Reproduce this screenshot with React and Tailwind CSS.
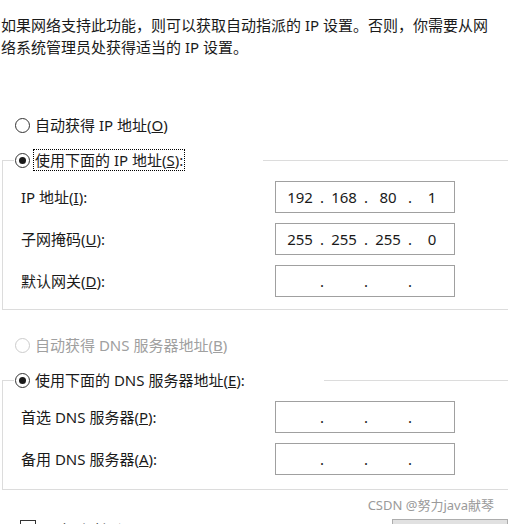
import React from "react";

function Radio({ checked, disabled }) {
    return (
        <span
            className={
                "flex h-[15px] w-[15px] shrink-0 items-center justify-center rounded-full border bg-white " +
                (disabled ? "border-[#cccccc]" : "border-[#333333]")
            }
        >
            {checked && <span className="h-[7px] w-[7px] rounded-full bg-[#1a1a1a]" />}
        </span>
    );
}

function IpBox({ parts = ["", "", "", ""] }) {
    return (
        <div className="flex h-[32px] w-[180px] items-center border border-[#a0a0a0] bg-white pl-[6px]">
            {parts.map((p, i) => (
                <React.Fragment key={i}>
                    {i > 0 && <span className="w-[8px] text-center">.</span>}
                    <span className="w-[36px] text-center">{p}</span>
                </React.Fragment>
            ))}
        </div>
    );
}

function Row({ label, mnemonic, pre, post, parts }) {
    return (
        <div className="flex items-center">
            <div className="w-[254px]">
                {pre}
                <span className="underline">{mnemonic}</span>
                {post}
            </div>
            <IpBox parts={parts} />
        </div>
    );
}

export default function App() {
    return (
        <div className="h-[524px] w-[508px] overflow-hidden bg-white font-['Noto_Sans','Noto_Sans_CJK_SC',sans-serif] text-[15px] leading-[22px] text-[#1a1a1a]">
            {/* intro text */}
            <p className="pl-[1px] pt-[14px]">
                如果网络支持此功能，则可以获取自动指派的 IP 设置。否则，你需要从网
                <br />
                络系统管理员处获得适当的 IP 设置。
            </p>

            {/* auto ip */}
            <div className="mt-[56px] flex h-[22px] items-center pl-[15px]">
                <Radio />
                <span className="ml-[5px]">
                    自动获得 IP 地址(<span className="underline">O</span>)
                </span>
            </div>

            {/* manual ip group */}
            <fieldset className="ml-[2px] mt-[13px] border-y border-l border-r-0 border-[#dcdcdc] pb-[12px] pl-[18px]">
                <legend className="-ml-[7px] flex h-[22px] w-[249px] items-center bg-white pl-[1px]">
                    <Radio checked />
                    <span className="ml-[3px] border border-dotted border-black px-[1px] leading-[20px]">
                        使用下面的 IP 地址(<span className="underline">S</span>):
                    </span>
                </legend>
                <div className="mt-[10px] flex flex-col gap-[10px]">
                    <Row pre="IP 地址(" mnemonic="I" post="):" parts={["192", "168", "80", "1"]} />
                    <Row pre="子网掩码(" mnemonic="U" post="):" parts={["255", "255", "255", "0"]} />
                    <Row pre="默认网关(" mnemonic="D" post="):" />
                </div>
            </fieldset>

            {/* auto dns */}
            <div className="mt-[24px] flex h-[22px] items-center pl-[15px] text-[#a0a0a0]">
                <Radio disabled />
                <span className="ml-[5px]">
                    自动获得 DNS 服务器地址(<span className="underline">B</span>)
                </span>
            </div>

            {/* manual dns group */}
            <fieldset className="ml-[2px] mt-[13px] border-y border-l border-r-0 border-[#dcdcdc] pb-[14px] pl-[18px]">
                <legend className="-ml-[7px] flex h-[22px] w-[310px] items-center bg-white pl-[1px]">
                    <Radio checked />
                    <span className="ml-[5px]">
                        使用下面的 DNS 服务器地址(<span className="underline">E</span>):
                    </span>
                </legend>
                <div className="mt-[10px] flex flex-col gap-[10px]">
                    <Row pre="首选 DNS 服务器(" mnemonic="P" post="):" />
                    <Row pre="备用 DNS 服务器(" mnemonic="A" post="):" />
                </div>
            </fieldset>

            {/* watermark */}
            <div className="flex h-[29px] items-center justify-end pr-[14px] text-[13px] text-[#9a9a9a]">
                CSDN @努力java献琴
            </div>

            {/* bottom row */}
            <div className="flex items-start">
                <span className="ml-[20px] mt-[1px] h-[16px] w-[16px] border border-[#333333]" />
                <span className="ml-[6px]">退出时验证设置(L)</span>
                <div className="ml-auto h-[30px] w-[116px] border border-[#adadad] bg-[#e1e1e1] text-center">
                    高级(V)...
                </div>
            </div>
        </div>
    );
}
